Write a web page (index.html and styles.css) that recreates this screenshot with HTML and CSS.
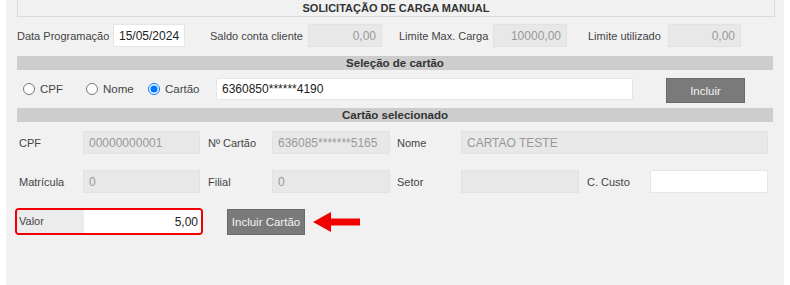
FILE: index.html
```html
<!DOCTYPE html>
<html lang="pt-BR">
<head>
    <meta charset="UTF-8">
    <meta name="viewport" content="width=device-width, initial-scale=1.0">
    <title>Solicitação de Carga Manual</title>
    <link rel="stylesheet" href="styles.css">
</head>
<body>

    <div class="panel">
        <div class="title">SOLICITAÇÃO DE CARGA MANUAL</div>

        <div class="row row-top">
            <label class="lbl w-data">Data Programação</label>
            <input class="field w72" type="text" value="15/05/2024">
            <label class="lbl w-saldo">Saldo conta cliente</label>
            <input class="field num w74" type="text" value="0,00" disabled>
            <label class="lbl w-max">Limite Max. Carga</label>
            <input class="field num w74" type="text" value="10000,00" disabled>
            <label class="lbl w-util">Limite utilizado</label>
            <input class="field num w73" type="text" value="0,00" disabled>
        </div>

        <div class="bar">Seleção de cartão</div>

        <div class="row row-radio">
            <label class="opt opt-cpf"><input type="radio" name="tipo"> CPF</label>
            <label class="opt opt-nome"><input type="radio" name="tipo"> Nome</label>
            <label class="opt opt-cartao"><input type="radio" name="tipo" checked> Cartão</label>
            <input class="field busca" type="text" value="6360850******4190">
            <button class="btn btn-incluir" type="button">Incluir</button>
        </div>

        <div class="bar">Cartão selecionado</div>

        <div class="row row-card">
            <label class="lbl c1">CPF</label>
            <input class="field w117" type="text" value="00000000001" disabled>
            <label class="lbl c2">Nº Cartão</label>
            <input class="field w118" type="text" value="636085*******5165" disabled>
            <label class="lbl c3">Nome</label>
            <input class="field w307" type="text" value="CARTAO TESTE" disabled>
        </div>

        <div class="row row-card row-second">
            <label class="lbl c1">Matrícula</label>
            <input class="field w117" type="text" value="0" disabled>
            <label class="lbl c2">Filial</label>
            <input class="field w118" type="text" value="0" disabled>
            <label class="lbl c3">Setor</label>
            <input class="field w118" type="text" value="" disabled>
            <label class="lbl c4">C. Custo</label>
            <input class="field w118" type="text" value="">
        </div>

        <div class="row row-valor">
            <div class="valor-box">
                <label class="valor-lbl">Valor</label>
                <input class="valor-input" type="text" value="5,00">
            </div>
            <button class="btn btn-cartao" type="button">Incluir Cartão</button>
            <svg class="arrow" width="48" height="22" viewBox="0 0 48 22">
                <polygon points="0,11 18,1 18,7.5 47,7.5 47,14.5 18,14.5 18,21" fill="#f00000"/>
            </svg>
        </div>
    </div>

</body>
</html>
```

FILE: styles.css
```css
body {
    margin: 0;
    background-color: #fff;
    font-family: Tahoma, "Liberation Sans", Arial, sans-serif;
    font-size: 11px;
    color: #333;
}

.panel {
    margin: 0 6px;
    height: 285px;
    background-color: #f1f1f1;
    padding: 0 9px 0 11px;
    overflow: hidden;
}

.title {
    margin-top: -1px;
    height: 16px;
    line-height: 16px;
    border: 1px solid #d9d9d9;
    text-align: center;
    font-weight: bold;
    font-size: 11px;
    color: #333;
}

.row {
    display: flex;
    align-items: center;
}

.row-top {
    margin-top: 7px;
    height: 23px;
}

.lbl {
    flex: none;
    color: #444;
    white-space: nowrap;
}

.w-data { width: 96px; }
.w-saldo { width: 98px; margin-left: 25px; }
.w-max { width: 94px; margin-left: 17px; }
.w-util { width: 80px; margin-left: 21px; }

.field {
    flex: none;
    box-sizing: border-box;
    height: 23px;
    border: 1px solid #e6e6e6;
    background-color: #fff;
    font-family: inherit;
    font-size: 12px;
    color: #222;
    padding: 0 5px;
    outline: none;
}

.field:disabled {
    background-color: #e8e8e8;
    border-color: #e2e2e2;
    color: #999;
}

.num { text-align: right; }

.w72 { width: 72px; }
.w73 { width: 73px; }
.w74 { width: 74px; }
.w117 { width: 117px; }
.w118 { width: 118px; }
.w307 { width: 307px; }

.bar {
    margin-right: 2px;
    height: 14px;
    line-height: 14px;
    background-color: #cdcdcd;
    text-align: center;
    font-weight: bold;
    font-size: 11.5px;
    color: #333;
}

.row-top + .bar { margin-top: 9px; }

.row-radio {
    margin-top: 8px;
    height: 25px;
    align-items: flex-start;
}

.opt {
    flex: none;
    display: flex;
    align-items: center;
    height: 22px;
    font-size: 11.5px;
    color: #444;
    white-space: nowrap;
}

.opt input {
    width: 12px;
    height: 12px;
    margin: 0 5px 0 0;
}

.opt-cpf { margin-left: 6px; width: 63px; }
.opt-nome { width: 62px; }
.opt-cartao { width: 68px; }

.busca {
    width: 417px;
    height: 22px;
}

.btn {
    flex: none;
    box-sizing: border-box;
    background-color: #7a7a7a;
    border: 1px solid #6a6a6a;
    color: #f2f2f2;
    font-family: inherit;
    font-size: 11.5px;
    padding: 0;
    cursor: pointer;
}

.btn-incluir {
    margin-left: 33px;
    width: 79px;
    height: 25px;
}

.row-radio + .bar { margin-top: 5px; }

.row-card {
    margin-top: 9px;
    height: 23px;
}

.row-second { margin-top: 16px; }

.c1 { width: 64px; margin-left: 2px; }
.c2 { width: 64px; margin-left: 8px; }
.c3 { width: 64px; margin-left: 7px; }
.c4 { width: 63px; margin-left: 8px; }

.row-valor {
    margin-top: 15px;
    height: 27px;
}

.valor-box {
    flex: none;
    display: flex;
    width: 188px;
    height: 27px;
    box-sizing: border-box;
    margin-left: -2px;
    border: 2px solid #f00000;
    border-radius: 4px;
    overflow: hidden;
}

.valor-lbl {
    width: 67px;
    background-color: #ececec;
    color: #444;
    padding-left: 2px;
    line-height: 22px;
    box-sizing: border-box;
}

.valor-input {
    flex: 1;
    min-width: 0;
    border: none;
    background-color: #fff;
    text-align: right;
    font-family: inherit;
    font-size: 12px;
    color: #222;
    padding: 0 3px 0 0;
    outline: none;
}

.btn-cartao {
    margin-left: 24px;
    width: 78px;
    height: 26px;
}

.arrow {
    flex: none;
    margin-left: 8px;
}
```
